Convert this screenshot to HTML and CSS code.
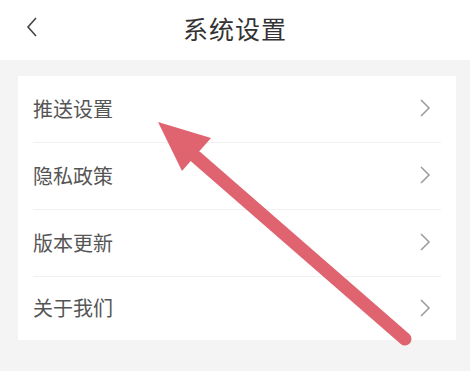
FILE: index.html
```html
<!DOCTYPE html>
<html lang="zh-CN">
  <head>
    <meta charset="UTF-8" />
    <meta name="viewport" content="width=device-width, initial-scale=1.0" />
    <title>系统设置</title>
    <link rel="stylesheet" href="styles.css">
  </head>
  <body>
    <main class="page">
      <!-- Top bar -->
      <header class="topbar">
        <svg class="back" width="12" height="20" viewBox="0 0 12 20">
          <path d="M10 1 L2 10 L10 19" fill="none" stroke="#444" stroke-width="1.6" />
        </svg>
        <h1 class="title">系统设置</h1>
      </header>

      <section class="card">
        <div class="row">
          <span class="label">推送设置</span>
          <svg class="chev" width="12" height="18" viewBox="0 0 12 18">
            <path d="M2 1 L10 9 L2 17" fill="none" stroke="#999" stroke-width="1.5" />
          </svg>
        </div>
        <div class="row">
          <span class="label">隐私政策</span>
          <svg class="chev" width="12" height="18" viewBox="0 0 12 18">
            <path d="M2 1 L10 9 L2 17" fill="none" stroke="#999" stroke-width="1.5" />
          </svg>
        </div>
        <div class="row">
          <span class="label">版本更新</span>
          <svg class="chev" width="12" height="18" viewBox="0 0 12 18">
            <path d="M2 1 L10 9 L2 17" fill="none" stroke="#999" stroke-width="1.5" />
          </svg>
        </div>
        <div class="row">
          <span class="label">关于我们</span>
          <svg class="chev" width="12" height="18" viewBox="0 0 12 18">
            <path d="M2 1 L10 9 L2 17" fill="none" stroke="#999" stroke-width="1.5" />
          </svg>
        </div>
      </section>

      <!-- Annotation arrow over the list -->
      <svg class="arrow" width="470" height="371" viewBox="0 0 470 371">
        <line x1="196" y1="157" x2="405" y2="339" stroke="#e0646f" stroke-width="13" stroke-linecap="round" />
        <polygon points="158,122 211,138 182,171" fill="#e0646f" />
      </svg>
    </main>
  </body>
</html>
```

FILE: styles.css
```css
* {
  margin: 0;
  padding: 0;
  box-sizing: border-box;
}

html,
body {
  width: 100%;
  height: 100%;
}

body {
  background: #f4f4f4;
  font-family: "Noto Sans CJK SC", "Noto Sans", sans-serif;
  overflow: hidden;
}

.page {
  position: relative;
  width: 470px;
  height: 371px;
}

.topbar {
  position: relative;
  height: 60px;
  background: #fff;
  display: flex;
  align-items: center;
  justify-content: center;
}

.back {
  position: absolute;
  left: 26px;
  top: 17px;
}

.title {
  font-size: 25px;
  font-weight: 400;
  color: #333;
  letter-spacing: 1px;
  margin-top: -4px;
}

.card {
  margin: 16px 14px 0 18px;
  background: #fff;
  padding: 0 15px;
}

.row {
  height: 67px;
  display: flex;
  align-items: center;
  justify-content: space-between;
  border-bottom: 1px solid #f1f1f1;
  padding-right: 10px;
}

.row:last-child {
  border-bottom: none;
  height: 63px;
}

.label {
  font-size: 20px;
  color: #555;
  margin-top: -2px;
}

.chev {
  margin-top: -2px;
}

.arrow {
  position: absolute;
  left: 0;
  top: 0;
  pointer-events: none;
}
```
